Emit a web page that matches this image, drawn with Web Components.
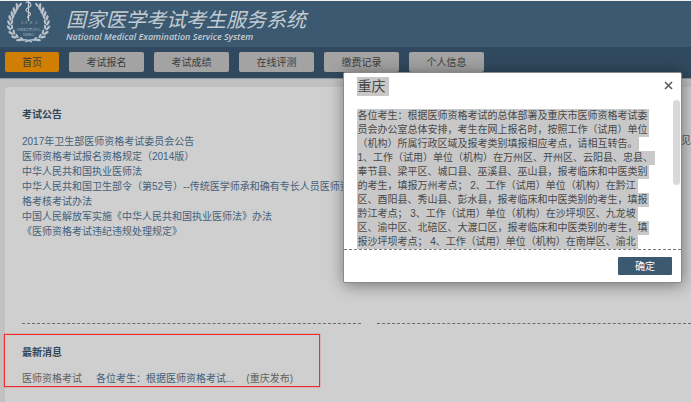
<!DOCTYPE html>
<html lang="zh-CN">
<head>
<meta charset="utf-8">
<title>国家医学考试考生服务系统</title>
<style>
  html, body {
    height: 100%;
  }

  body {
    margin: 0;
    overflow: hidden;
    background: #c1c1c1;
    color: #5f5f5f;
    font: 10px/15px "Liberation Sans", "Noto Sans CJK SC", sans-serif;
  }
</style>
</head>
<body>
<exam-app></exam-app>

<script>
class ExamLogo extends HTMLElement {
  constructor() {
    super();
    this.attachShadow({ mode: 'open' });

    // leaf positions of the left branch, the right one is mirrored
    const leaves = [
      [17, 5, 22], [14, 9, 20], [12, 13, 14], [10, 17, 8], [9, 22, 0],
      [9, 27, -14], [11, 32, -30], [14, 36, -48], [19, 39, -68]
    ];
    const branch = leaves.map(([x, y, a]) => `
      <ellipse cx="${x}" cy="${y}" rx="1.3" ry="3" transform="rotate(${a - 28} ${x} ${y})"/>
      <ellipse cx="${x + 3}" cy="${y - 1}" rx="1.1" ry="2.6" transform="rotate(${a + 18} ${x + 3} ${y - 1})"/>
    `).join('');

    this.shadowRoot.innerHTML = `
      <style>
        :host { display: block; }
        svg { display: block; }
      </style>
      <svg width="57" height="46" viewBox="0 0 57 46" fill="#b9c2ca">
        <g>${branch}</g>
        <g transform="matrix(-1 0 0 1 57 0)">${branch}</g>
        <path d="M21 39Q26 38 32 41M36 39Q31 38 25 41" fill="none" stroke="#b9c2ca" stroke-width="1.3"/>
        <path d="M28.5 0V20" stroke="#c6cdd3" stroke-width="1.2"/>
        <path d="M26 2C26 0 31 1 31 4S26 6 26 9S30.500 10 30.500 13S27 14 27.500 17" fill="none" stroke="#c6cdd3" stroke-width="1.1"/>
        <g font-size="4" text-anchor="middle" fill="#9dabb7">
          <text x="22" y="23">1</text><text x="26" y="23">9</text><text x="31" y="23">8</text><text x="36" y="23">5</text>
          <text x="29" y="30" font-size="3">国家医学考试中心</text>
          <text x="29" y="35">NMEC</text>
        </g>
      </svg>
    `;
  }
}
customElements.define('exam-logo', ExamLogo);

class ExamHeader extends HTMLElement {
  constructor() {
    super();
    this.attachShadow({ mode: 'open' }).innerHTML = `
      <style>
        :host {
          display: flex;
          gap: 9px;
          height: 46px;
          border-top: 1px solid #eef2f3;
          background: #3b5a72;
          color: #c4ccd2;
          white-space: nowrap;
        }
        .names { padding-top: 7px; }
        h1 {
          margin: 0;
          font-size: 20px;
          line-height: 24px;
          font-weight: 400;
          font-style: italic;
        }
        p {
          margin: 0;
          font: italic 600 9px/9px "Open Sans", sans-serif;
        }
      </style>
      <exam-logo></exam-logo>
      <div class="names">
        <h1>国家医学考试考生服务系统</h1>
        <p>National Medical Examination Service System</p>
      </div>
    `;
  }
}
customElements.define('exam-header', ExamHeader);

class ExamNav extends HTMLElement {
  constructor() {
    super();
    this.attachShadow({ mode: 'open' });
    const items = ['首页', '考试报名', '考试成绩', '在线评测', '缴费记录', '个人信息'];
    this.shadowRoot.innerHTML = `
      <style>
        :host {
          display: block;
          background: #31495e;
          border-bottom: 1px solid #8d979f;
        }
        nav {
          display: flex;
          gap: 10px;
          padding: 5px 5px 6px;
        }
        button {
          min-width: 75px;
          height: 20px;
          padding: 0;
          border: 0;
          border-radius: 2px;
          background: #a3a3a3;
          color: #3c3c3c;
          font: inherit;
          white-space: nowrap;
        }
        button.active {
          min-width: 54px;
          background: #d07f04;
        }
      </style>
      <nav>
        ${items.map((t, i) => `<button type="button"${i === 0 ? ' class="active"' : ''}>${t}</button>`).join('')}
      </nav>
    `;
  }
}
customElements.define('exam-nav', ExamNav);

class NoticeList extends HTMLElement {
  constructor() {
    super();
    this.attachShadow({ mode: 'open' });
    const notices = [
      '2017年卫生部医师资格考试委员会公告',
      '医师资格考试报名资格规定（2014版）',
      '中华人民共和国执业医师法',
      '中华人民共和国卫生部令（第52号）--传统医学师承和确有专长人员医师资格考核考试办法',
      '中国人民解放军实施《中华人民共和国执业医师法》办法',
      '《医师资格考试违纪违规处理规定》'
    ];
    this.shadowRoot.innerHTML = `
      <style>
        :host { display: block; }
        h2 {
          margin: 0 0 12px;
          color: #2f475b;
          font-size: 10px;
          line-height: 15px;
        }
        ul {
          margin: 0;
          padding: 0 10px 0 0;
          list-style: none;
        }
        a {
          color: #41627d;
          text-decoration: none;
        }
      </style>
      <h2>考试公告</h2>
      <ul>${notices.map(t => `<li><a href="#">${t}</a></li>`).join('')}</ul>
    `;
  }
}
customElements.define('notice-list', NoticeList);

class NewsList extends HTMLElement {
  constructor() {
    super();
    this.attachShadow({ mode: 'open' }).innerHTML = `
      <style>
        :host {
          display: block;
          position: relative;
          padding-top: 21px;
        }
        h2 {
          margin: 0 0 11px;
          color: #2f475b;
          font-size: 10px;
          line-height: 15px;
        }
        .row {
          display: flex;
          white-space: nowrap;
        }
        .type { margin-right: 14px; }
        a {
          margin-right: 12px;
          color: #41627d;
          text-decoration: none;
        }
        .mark {
          position: absolute;
          inset: 10px 41px -1px -18px;
          border: 1px solid #f52a2a;
          box-shadow: 0 0 1px #f52a2a;
          pointer-events: none;
        }
      </style>
      <h2>最新消息</h2>
      <div class="row">
        <span class="type">医师资格考试</span>
        <a href="#">各位考生：根据医师资格考试...</a>
        <span>(重庆发布)</span>
      </div>
      <div class="mark"></div>
    `;
  }
}
customElements.define('news-list', NewsList);

class ExamPanel extends HTMLElement {
  constructor() {
    super();
    this.attachShadow({ mode: 'open' }).innerHTML = `
      <style>
        :host {
          flex: 1;
          display: grid;
          grid-template-columns: 27fr 25fr;
          grid-template-rows: auto 1fr;
          align-items: start;
          column-gap: 16px;
          margin: 8px 0 0 5px;
          padding: 20px 0 0 17px;
          border-radius: 4px 0 0 0;
          background: #cfcfcf;
        }
        .top {
          box-sizing: border-box;
          min-height: 217px;
          border-bottom: 1px dashed #6c6c6c;
        }
        .more {
          padding-top: 26px;
          text-align: right;
        }
        .more a {
          color: #4d5a64;
          text-decoration: none;
        }
      </style>
      <div class="top"><slot name="notices"></slot></div>
      <div class="top more"><a href="#">见</a></div>
      <slot name="news"></slot>
    `;
  }
}
customElements.define('exam-panel', ExamPanel);

class NoticeDialog extends HTMLElement {
  constructor() {
    super();
    this.attachShadow({ mode: 'open' });
    const lines = [
      '各位考生：根据医师资格考试的总体部署及重庆市医师资格考试委',
      '员会办公室总体安排，考生在网上报名时，按照工作（试用）单位',
      '（机构）所属行政区域及报考类别填报相应考点，请相互转告。',
      '1、工作（试用）单位（机构）在万州区、开州区、云阳县、忠县、',
      '奉节县、梁平区、城口县、巫溪县、巫山县，报考临床和中医类别',
      '的考生，填报万州考点； 2、工作（试用）单位（机构）在黔江',
      '区、酉阳县、秀山县、彭水县，报考临床和中医类别的考生，填报',
      '黔江考点； 3、工作（试用）单位（机构）在沙坪坝区、九龙坡',
      '区、渝中区、北碚区、大渡口区，报考临床和中医类别的考生，填',
      '报沙坪坝考点； 4、工作（试用）单位（机构）在南岸区、渝北'
    ];
    this.shadowRoot.innerHTML = `
      <style>
        :host {
          display: block;
          box-sizing: border-box;
          border: 1px solid #8a8a8a;
          border-radius: 2px;
          background: #fff;
          color: #484848;
          box-shadow: 1px 2px 16px rgba(0, 0, 0, .45);
        }
        header {
          display: flex;
          justify-content: space-between;
          align-items: flex-start;
          padding: 4px 8px 0 13px;
        }
        h3 {
          margin: 0;
          padding-right: 4px;
          background: #c8c8c8;
          font-size: 14px;
          line-height: 19px;
          font-weight: 400;
        }
        .close {
          display: block;
          padding: 4px 0 0;
          border: 0;
          background: none;
          line-height: 0;
        }
        .body {
          display: flex;
          justify-content: space-between;
          height: 149px;
          padding: 4px 1px 0 13px;
          overflow: hidden;
          border-bottom: 1px dashed #777;
        }
        .text {
          padding-top: 9px;
          line-height: 14px;
          white-space: nowrap;
        }
        .text span {
          display: block;
          width: max-content;
          padding-right: 2px;
          background: #c8c8c8;
        }
        .bar {
          width: 7px;
          height: 85px;
          border-radius: 4px;
          background: #d9d9d9;
        }
        footer {
          display: flex;
          justify-content: flex-end;
          padding: 7px 9px 7px;
        }
        footer button {
          width: 54px;
          height: 18px;
          padding: 0;
          border: 0;
          border-radius: 1px;
          background: #3b5a72;
          color: #fff;
          font: inherit;
        }
      </style>
      <header>
        <h3>重庆</h3>
        <button class="close" type="button" aria-label="关闭">
          <svg width="9" height="9" viewBox="0 0 9 9" stroke="#5a5a5a" stroke-width="1.6"><path d="M1 1L8 8M8 1L1 8"/></svg>
        </button>
      </header>
      <div class="body">
        <div class="text">${lines.map(t => `<span>${t}</span>`).join('')}</div>
        <div class="bar"></div>
      </div>
      <footer><button type="button">确定</button></footer>
    `;
  }
}
customElements.define('notice-dialog', NoticeDialog);

class ExamApp extends HTMLElement {
  constructor() {
    super();
    this.attachShadow({ mode: 'open' }).innerHTML = `
      <style>
        :host {
          display: flex;
          flex-direction: column;
          position: relative;
          min-height: 100%;
        }
        notice-dialog {
          position: absolute;
          top: 72px;
          right: 9px;
          width: 49%;
        }
      </style>
      <exam-header></exam-header>
      <exam-nav></exam-nav>
      <exam-panel>
        <notice-list slot="notices"></notice-list>
        <news-list slot="news"></news-list>
      </exam-panel>
      <notice-dialog role="dialog" aria-label="重庆"></notice-dialog>
    `;
  }
}
customElements.define('exam-app', ExamApp);
</script>
</body>
</html>
